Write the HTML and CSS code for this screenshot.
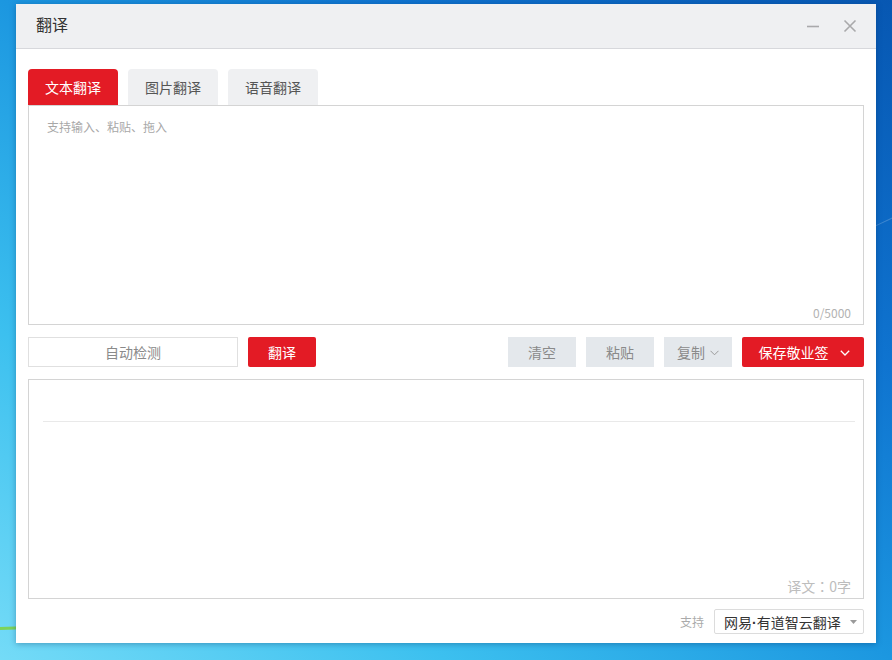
FILE: index.html
```html
<!DOCTYPE html>
<html lang="zh-CN">
<head>
<meta charset="utf-8">
<title>翻译</title>
<link rel="stylesheet" href="styles.css">
</head>
<body>
<div class="desktop">
  <div class="glow glow-a"></div>
  <div class="glow glow-b"></div>
  <div class="window">
    <div class="titlebar">
      <span class="title">翻译</span>
      <div class="controls">
        <svg class="ctl" width="14" height="14" viewBox="0 0 14 14"><path d="M1 7.5H13" stroke="#a9a9ab" stroke-width="1.6"/></svg>
        <svg class="ctl" width="14" height="14" viewBox="0 0 14 14"><path d="M1.5 1.5L12.5 12.5M12.5 1.5L1.5 12.5" stroke="#a9a9ab" stroke-width="1.6"/></svg>
      </div>
    </div>
    <div class="content">
      <div class="tabs">
        <div class="tab active">文本翻译</div>
        <div class="tab">图片翻译</div>
        <div class="tab">语音翻译</div>
      </div>
      <div class="box input-box">
        <div class="placeholder">支持输入、粘贴、拖入</div>
        <div class="counter">0/5000</div>
      </div>
      <div class="actions">
        <div class="lang">自动检测</div>
        <div class="btn red small">翻译</div>
        <div class="spacer"></div>
        <div class="btn grey">清空</div>
        <div class="btn grey">粘贴</div>
        <div class="btn grey">复制<svg class="chev" width="9" height="6" viewBox="0 0 9 6"><path d="M0.5 0.8L4.5 4.8L8.5 0.8" fill="none" stroke="#9a9a9a" stroke-width="1"/></svg></div>
        <div class="btn red wide">保存敬业签<svg class="chev chev-w" width="10" height="6" viewBox="0 0 10 6"><path d="M0.8 0.8L5 5L9.2 0.8" fill="none" stroke="#ffffff" stroke-width="1.3"/></svg></div>
      </div>
      <div class="box output-box">
        <div class="divider"></div>
        <div class="result-count">译文<span class="colon" lang="zh-TW">：</span>0字</div>
      </div>
      <div class="footer">
        <span class="support">支持</span>
        <div class="select">
          <span>网易<span class="dot">·</span>有道智云翻译</span>
          <svg width="7" height="4" viewBox="0 0 7 4"><path d="M0 0H7L3.5 4Z" fill="#9a9a9a"/></svg>
        </div>
      </div>
    </div>
  </div>
</div>
</body>
</html>
```
FILE: styles.css
```css
* { box-sizing: border-box; }
html, body { margin: 0; padding: 0; }
body {
  font-family: "Microsoft YaHei", "Noto Sans CJK SC", "Noto Sans", sans-serif;
  width: 892px;
  height: 660px;
  overflow: hidden;
}
.desktop {
  position: relative;
  width: 892px;
  height: 660px;
  padding: 4px 16px 0 16px;
  background: linear-gradient(to top right, #74dbf7 0%, #3cc0ef 25%, #1c97e0 50%, #0f74d0 72%, #0757b2 100%);
  overflow: hidden;
}
.glow {
  position: absolute;
  pointer-events: none;
}
.glow-a {
  left: -30px; width: 60px; height: 3px;
  background: #7dd35a;
  transform: rotate(-2deg);
  top: 627px;
}
.glow-b {
  right: -10px; top: 220px; width: 30px; height: 1px;
  background: rgba(255,255,255,0.2);
  transform: rotate(-25deg);
}
.window {
  position: relative;
  width: 860px;
  height: 639px;
  background: #ffffff;
  box-shadow: 0 1px 6px rgba(0, 40, 90, 0.35);
  display: flex;
  flex-direction: column;
}
.titlebar {
  height: 45px;
  background: #eff0f2;
  border-bottom: 1px solid #d7d8dc;
  display: flex;
  align-items: center;
  padding: 0 19px 0 20px;
}
.title {
  font-size: 16px;
  color: #333;
  margin-top: -5px;
}
.controls {
  margin-left: auto;
  display: flex;
  gap: 23px;
  align-items: center;
}
.ctl { display: block; }
.content {
  padding: 20px 12px 0 12px;
  display: flex;
  flex-direction: column;
}
.tabs {
  display: flex;
  gap: 10px;
  height: 36px;
}
.tab {
  width: 90px;
  height: 36px;
  line-height: 36px;
  text-align: center;
  font-size: 14px;
  color: #555;
  background: #eff0f2;
  border-radius: 4px 4px 0 0;
}
.tab.active {
  background: #e31b25;
  color: #fff;
}
.box {
  position: relative;
  border: 1px solid #d4d4d4;
  height: 220px;
}
.placeholder {
  padding: 13px 0 0 18px;
  font-size: 12px;
  color: #a8a8a8;
  line-height: 16px;
}
.counter {
  position: absolute;
  right: 12px;
  bottom: 3px;
  font-size: 12px;
  color: #b2b2b2;
  line-height: 16px;
}
.actions {
  margin-top: 12px;
  height: 30px;
  display: flex;
  gap: 10px;
}
.lang {
  width: 210px;
  border: 1px solid #e0e0e0;
  font-size: 14px;
  color: #8a8a8a;
  text-align: center;
  line-height: 28px;
}
.spacer { flex: 1; }
.btn {
  width: 68px;
  height: 30px;
  font-size: 14px;
  display: flex;
  align-items: center;
  justify-content: center;
}
.btn.red {
  background: #e31b25;
  color: #fff;
  border-radius: 2px;
}
.btn.grey {
  background: #e4e8ec;
  color: #8a8a8a;
}
.btn.wide { width: 122px; font-size: 14px; padding-left: 2px; }
.chev { margin-left: 5px; margin-top: 1px; }
.chev-w { margin-left: 11px; }
.output-box {
  margin-top: 12px;
  padding: 41px 8px 0 14px;
}
.divider {
  height: 1px;
  background: #e9e9e9;
}
.result-count {
  position: absolute;
  right: 12px;
  bottom: 2px;
  font-size: 14px;
  color: #bdbdbd;
  line-height: 20px;
}
.colon {
  font-family: "Noto Sans CJK TC", "Noto Sans CJK SC", sans-serif;
}
.footer {
  margin-top: 10px;
  display: flex;
  justify-content: flex-end;
  align-items: center;
  gap: 10px;
}
.support {
  font-size: 12px;
  color: #aaa;
}
.select {
  width: 150px;
  height: 25px;
  border: 1px solid #dcdcdc;
  border-radius: 2px;
  display: flex;
  align-items: center;
  justify-content: space-between;
  padding: 0 6px 0 9px;
  font-size: 14px;
  color: #333;
}
.dot {
  font-family: "Liberation Sans", sans-serif;
  font-weight: bold;
}
.select svg { margin-top: 1px; }
```
